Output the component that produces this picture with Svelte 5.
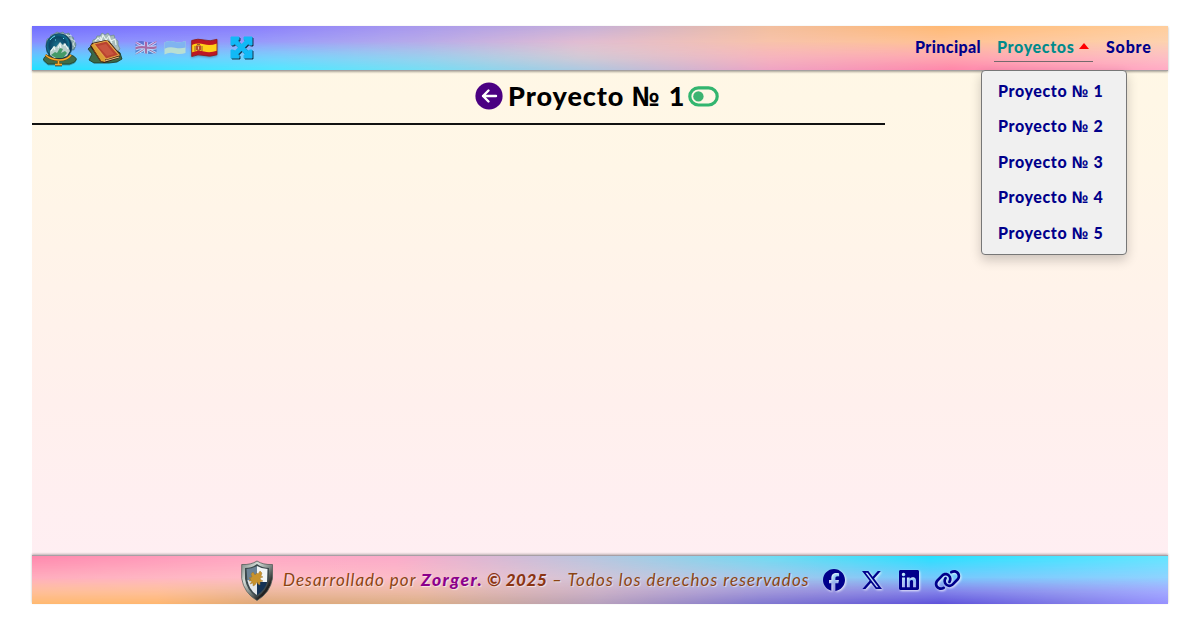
<script>
  const projects = [1, 2, 3, 4, 5];
</script>

<div class="page">
  <header class="bar top">
    <div class="tools">
      <svg class="globe" viewBox="0 0 36 36" width="36" height="36">
        <defs>
          <radialGradient id="sky" cx="45%" cy="45%">
            <stop offset="0" stop-color="#1c7490" /><stop offset=".65" stop-color="#0c4766" /><stop offset=".88" stop-color="#12708f" /><stop offset="1" stop-color="#0a3050" />
          </radialGradient>
        </defs>
        <path d="M4 14l1-6 3-1 1-3 3-1 3-2 3 1 3-1 2 2 4-1 1 4 3 0 1 4 2 3-2 5-26 2z" fill="#8eaaae" stroke="#5b8285" stroke-width=".6" />
        <path d="M24 3l2 2 3-1 0 4 4 2-2 3 2 3" fill="none" stroke="#d4e5e4" stroke-width=".9" />
        <path d="M1.500 29q0-4 6-5l5 2 11-1q7-3 11 3l-2 3-5 2H6z" fill="#3f6c48" stroke="#1f4029" stroke-width=".8" />
        <circle cx="17" cy="15.500" r="12.800" fill="url(#sky)" stroke="#0c3f5e" stroke-width=".8" />
        <path d="M8 24l0-4 4-5 2 1 4-5 3 3 1-2 3 4 1-1 2 5-3 5-6 2h-7z" fill="#b7cecb" />
        <path d="M9 24l4-3 2 1 3-5 3 1-2 4 4-2 2 2-4 5h-7z" fill="#459a68" />
        <path d="M9 20l3-4 1 3m3-2l2-4 1 4m3-2l1-2 3 5" fill="none" stroke="#edf8f6" stroke-width="1.100" />
        <path d="M8 9q2-3 5-4M21 7l1 1m-9 1l1 0" fill="none" stroke="#6de0ec" />
        <path d="M3.500 24q5 4.500 13 5t12.500-5M16.500 30v3m-3.500.5h7" fill="none" stroke="#6b420c" stroke-width="2.400" />
        <path d="M3.500 24q5 4.500 13 5t12.500-5M16.500 30v3m-3.500.5h7" fill="none" stroke="#f5ac2f" stroke-width="1.500" />
      </svg>
      <svg class="book" viewBox="0 0 36 34" width="36" height="34">
        <path d="M5 14l1-5 3-1 1-3 3 0 2-3 3 2 3-2 2 3 4-1 1 4 3 2v4l2 4-6 5-16-4z" fill="#a9bdba" stroke="#6f8c87" stroke-width=".7" />
        <path d="M8 10l3-3 3 3 2-6 3 5 3-4 2 5 4-2 1 6M13 6l2 4m7-3l3 5" fill="none" stroke="#eaf5f1" stroke-width="1.100" />
        <path d="M1 18q4-5 8-1l3 6q9-2 14 0l4-3q4 1 4 5l1 3-5 3-8 1H7l-5-3 3-6z" fill="#3d6845" stroke="#1b3523" stroke-width=".8" />
        <path d="M3 15l2-3 14-3 3 1 11 13-1 4-15 5-4-2z" fill="#3b1710" />
        <path d="M4 14l10 16 4 1 0-4L8 12z" fill="#d99f33" />
        <path d="M6.500 19l8 12" stroke="#774014" />
        <path d="M7 13l13-3 12 14-13 4z" fill="#b9432f" stroke="#e2a447" stroke-width="1.200" />
        <path d="M11 15l8-2 8 10-7 2z" fill="#c9553f" />
        <path d="M18 30l14-4" stroke="#e4c27f" stroke-width="1.100" />
      </svg>
      <svg class="uk faded" viewBox="0 0 22 16" width="22" height="16">
        <defs><clipPath id="flag"><path d="M.5 2.500Q5 .2 10.500 1.700T21.500 1v12q-5 2-10.500.4T.5 14.500z" /></clipPath></defs>
        <g clip-path="url(#flag)">
          <path d="M0 0h22v16H0z" fill="#23459b" />
          <path d="M0 2l22 12M22 1L0 15" stroke="#fff" stroke-width="2.800" />
          <path d="M0 2l22 12M22 1L0 15" stroke="#d51d3a" />
          <path d="M11 0v16M0 8.500q5-2 11-1T22 7" fill="none" stroke="#fff" stroke-width="4.200" />
          <path d="M11 0v16M0 8.500q5-2 11-1T22 7" fill="none" stroke="#d51d3a" stroke-width="2.200" />
        </g>
      </svg>
      <svg class="ua" viewBox="0 0 22 16" width="22" height="16">
        <path d="M.5 2.500Q5 .2 10.500 1.700T21.500 1v12q-5 2-10.500.4T.5 14.500z" fill="#b9dfd3" />
        <path d="M.5 2.500Q5 .2 10.500 1.700T21.500 1v6.500q-5 1.500-10.500.2T.5 8.700z" fill="#80b4f0" />
      </svg>
      <svg class="es" viewBox="0 0 27 20" width="27" height="20">
        <path d="M.7 2.500Q7 .2 13 2t13-.7v15.500q-7 2.400-13 .7T.7 18.500z" fill="#bd1723" />
        <path d="M.7 7Q7 4.500 13 6.300T26 5.500v7.300q-7 2.400-13 .7T.7 14.500z" fill="#ffd019" />
        <path d="M.7 2.500Q7 .2 13 2t13-.7v15.500q-7 2.400-13 .7T.7 18.500z" fill="none" stroke="#8a1a16" stroke-width=".8" />
        <path d="M5 7.500h5v4q-2.500 3-5 0z" fill="#b84b2f" /><path d="M4 8v5m7-5v5M6 6.500h3" stroke="#985f32" /><path d="M7.500 8.500v3" stroke="#e8b99c" />
      </svg>
      <svg class="expand" viewBox="0 0 24 24" width="24" height="24">
        <path d="M4 4l15 15M19 4L4 19" stroke="#12b9f6" stroke-width="4.800" />
        <path d="M1 1h8v2.500L3.500 9H1zM22 1h-8v2.500L19.500 9H22zM1 22h8v-2.500L3.500 14H1zM22 22h-8v-2.500l5.500-5.500H22z" fill="#12b9f6" stroke="#12b9f6" stroke-width="1" stroke-linejoin="round" />
      </svg>
    </div>
    <nav>
      <a class="home" href="#home">Principal</a>
      <a class="active" href="#projects">Proyectos<i></i></a>
      <a class="about" href="#about">Sobre</a>
    </nav>
    <div class="menu">
      {#each projects as n}<a href="#p{n}">Proyecto <span class="no">№</span> {n}</a>{/each}
    </div>
  </header>

  <main>
    <div class="heading">
      <svg viewBox="0 0 28 28" width="28" height="28"><circle cx="14" cy="14" r="13.600" fill="#4b0082" /><path d="M21 14H8m5.500-5.500L8 14l5.500 5.500" fill="none" stroke="#fff" stroke-width="2.400" stroke-linecap="round" stroke-linejoin="round" /></svg>
      <h1>Proyecto <span class="no">№</span> 1</h1>
      <svg class="toggle" viewBox="0 0 31 21" width="31" height="21"><rect x="1.800" y="1.800" width="27.400" height="17.200" rx="8.600" fill="none" stroke="#32b56f" stroke-width="3.200" /><circle cx="10.400" cy="10.400" r="5.200" fill="#3cb371" /></svg>
    </div>
  </main>

  <footer class="bar bottom">
    <svg class="shield" viewBox="0 0 32 42" width="32" height="42">
      <defs><linearGradient id="metal" x2="1" y2="1"><stop stop-color="#788380" /><stop offset=".3" stop-color="#d5dcd7" /><stop offset=".55" stop-color="#77827f" /><stop offset=".75" stop-color="#222" /><stop offset="1" stop-color="#111" /></linearGradient></defs>
      <path d="M.7 4.500Q10 5 16 1q6 4 15.500 3.500v14Q29 33 16 40.500 3 33 .7 18.500z" fill="url(#metal)" stroke="#56605c" stroke-width=".8" />
      <path d="M4 8q7 0 12-4 5 4 12 4v11Q26 31 16 37 6 31 4 19z" fill="#3c494d" />
      <path d="M5.500 9q6 0 10.500-3v16H6.500z" fill="#6b8295" /><path d="M16 6q5 3 10.500 3l-.5 13H16z" fill="#f1f5f6" /><path d="M6.500 20l9.500 2v13Q8 30 6.500 20z" fill="#e4e8ea" /><path d="M16 22h10q-2 8-10 13z" fill="#143254" />
      <path d="M10 14l2-2 2 3 2-2 1 1 2-3 2 2-1 3 2 1-3 1 1 2 2 1-3 1 0 3-2-1-1-2-2 3-2 1 0-3-3 1 2-3-3 0 2-2-2-1 3-1z" fill="#c8932d" stroke="#97702a" stroke-width=".4" />
    </svg>
    <p><span class="dev">Desarrollado por</span><b class="name">Zorger.</b><b class="year">© 2025</b><span class="rights">– Todos los derechos reservados</span></p>
    <div class="social">
      <svg class="fb" viewBox="0 0 512 512" width="22" height="22"><path d="M512 256C512 114.600 397.400 0 256 0S0 114.600 0 256C0 376 82.700 476.800 194.200 504.500V334.200H141.400V256h52.800V222.300c0-87.100 39.400-127.500 125-127.500c16.200 0 44.200 3.200 55.700 6.400V172c-6-.6-16.500-1-29.600-1c-42 0-58.200 15.900-58.200 57.200V256h83.600l-14.400 78.200H287V510.100C413.800 494.800 512 386.900 512 256z" /></svg>
      <svg class="x" viewBox="0 0 16 16" width="20" height="22"><path d="M12.600.75h2.454l-5.360 6.142L16 15.250h-4.937l-3.867-5.070-4.425 5.070H.316l5.733-6.570L0 .75h5.063l3.495 4.633L12.601.75Zm-.86 13.028h1.360L4.323 2.145H2.865z" /></svg>
      <svg class="li" viewBox="0 32 448 448" width="20" height="20"><path d="M416 32H31.900C14.300 32 0 46.500 0 64.300v383.400C0 465.500 14.300 480 31.900 480H416c17.600 0 32-14.500 32-32.300V64.300c0-17.800-14.400-32.300-32-32.300zM135.400 416H69V202.200h66.500V416zm-33.200-243c-21.300 0-38.500-17.300-38.500-38.500S80.900 96 102.200 96c21.200 0 38.500 17.300 38.500 38.500 0 21.300-17.200 38.500-38.500 38.500zm282.100 243h-66.400V312c0-24.800-.5-56.700-34.500-56.700-34.600 0-39.900 27-39.900 54.900V416h-66.400V202.200h63.700v29.200h.9c8.900-16.800 30.600-34.500 62.200-34.500 66.500 0 78.900 43.800 78.900 100.900V416z" /></svg>
      <svg class="link" viewBox="0 0 640 512" width="27" height="22" preserveAspectRatio="none"><path d="M579.800 267.700c56.500-56.500 56.500-148 0-204.500c-50-50-128.800-56.500-186.300-15.400l-1.600 1.100c-14.400 10.300-17.700 30.300-7.400 44.600s30.300 17.700 44.600 7.400l1.600-1.100c32.100-22.900 76-19.300 103.800 8.600c31.500 31.500 31.500 82.500 0 114L422.300 334.800c-31.500 31.500-82.500 31.500-114 0c-27.900-27.900-31.500-71.800-8.600-103.800l1.100-1.600c10.300-14.400 6.900-34.400-7.400-44.600s-34.400-6.900-44.600 7.400l-1.100 1.600C206.500 251.200 213 330 263 380c56.500 56.500 148 56.500 204.500 0L579.800 267.700zM60.200 244.300c-56.500 56.500-56.500 148 0 204.500c50 50 128.800 56.500 186.300 15.400l1.600-1.100c14.400-10.300 17.700-30.300 7.400-44.600s-30.300-17.700-44.600-7.400l-1.600 1.100c-32.100 22.900-76 19.300-103.800-8.600C74 372 74 321 105.500 289.500L217.700 177.200c31.500-31.500 82.500-31.500 114 0c27.900 27.900 31.500 71.800 8.600 103.900l-1.100 1.600c-10.300 14.400-6.900 34.400 7.400 44.600s34.400 6.900 44.600-7.400l1.100-1.600C433.500 260.800 427 182 377 132c-56.500-56.500-148-56.500-204.500 0L60.200 244.300z" /></svg>
    </div>
  </footer>
</div>

<style>
  :global(body) { background: #fff; }
  .page { box-sizing: border-box; width: 1136px; height: 578px; margin: 26px 32px; display: flex; flex-direction: column; font-family: Lato, sans-serif; background: linear-gradient(#fff8e5, #fff6e7 25%, #fff0ed 65%, #ffeef4); }
  svg { display: block; flex: none; }
  .bar { position: relative; z-index: 1; display: flex; flex: none; isolation: isolate; }
  .bar::before, .bar::after { content: ""; position: absolute; inset: 0; z-index: -1; }
  .top { height: 44px; border-bottom: 1px solid #a5a0a0; box-shadow: 0 1px 2px #0005; justify-content: space-between; background: linear-gradient(90deg, #a2b2ff, #a8b8fb 20%, #c7bee7 34%, #ffcccb 48%, #ffc8b8 64%, #ffccb6 80%, #fad8c5); }
  .top::before { background: linear-gradient(90deg, #716cff, #8a7ffb 20%, #a596ef 32%, #c6b0d8 49%, #f2be9e 65%, #ffb974 80%, #ffcd9b); mask-image: linear-gradient(#000, transparent 75%); }
  .top::after { background: linear-gradient(90deg, #20e1ff, #52e7ff 22%, #78ddf3 35%, #b0c7df 49%, #efa4c3 65%, #ff86aa 81%, #ffabc5); mask-image: linear-gradient(transparent 35%, #000); }
  .tools { display: flex; align-items: flex-start; padding-left: 10px; }
  .globe { margin-top: 5px; filter: drop-shadow(0 1px 0 #205c5588); }
  .book { margin: 5px 0 0 9px; }
  .uk { margin: 14px 0 0 12px; }
  .ua { margin: 14px 0 0 7px; }
  .faded { opacity: .45; }
  .es { margin: 12px 0 0 5px; filter: drop-shadow(0 1px 1px #0004); }
  .expand { margin: 10px 0 0 12px; filter: drop-shadow(1px 1px .5px #012c); }
  a { color: #00008b; text-decoration: none; font-weight: 900; }
  nav { display: flex; padding: 11px 0 0; font-size: 16px; line-height: 20px; letter-spacing: .4px; }
  .home { width: 79px; }
  .active { box-sizing: border-box; width: 99px; height: 25px; padding-left: 3px; letter-spacing: .65px; color: #008b8b; border-bottom: 1px solid #75696d; margin-right: 13px; display: flex; }
  .active i { margin: 6px 0 0 5px; width: 0; height: 0; border: 5.500px solid transparent; border-top: 0; border-bottom: 6px solid red; }
  .about { width: 62px; letter-spacing: .8px; }
  .menu { position: absolute; left: 949px; top: 44px; box-sizing: border-box; width: 146px; height: 185px; padding: 2px 0 0 16px; border: 1px solid #777; border-radius: 4px; background: #f0f0f0; box-shadow: 0 5px 12px #0003; font-size: 16px; letter-spacing: .6px; }
  .menu a { display: block; height: 35.400px; line-height: 35px; white-space: nowrap; }
  .no { font-family: "Noto Sans", sans-serif; font-weight: 700; line-height: 1; margin-right: .03em; }
  main { flex: 1; }
  .heading { display: flex; align-items: center; box-sizing: border-box; width: 853px; height: 54px; padding: 0 0 2px 443px; border-bottom: 2px solid #111; }
  h1 { width: 180px; margin: -1px 0 0 5px; box-sizing: border-box; font-size: 27px; line-height: 36px; font-weight: 900; letter-spacing: .95px; white-space: nowrap; }
  .toggle { margin-top: 1px; }
  .bottom { height: 48px; border-top: 1px solid #a79fa5; box-shadow: 0 -1px 2px #0004; background: linear-gradient(90deg, #ffc6ca, #ffcccb 20%, #ffc8c8 32%, #e4c5d3 49%, #c5bce9 66%, #aab8fb 80%, #aec6ff); }
  .bottom::before { background: linear-gradient(90deg, #ff88ad, #ffa7c3 20%, #fbaac9 32%, #b8c5df 49%, #6edbf2 65%, #25e1ff 79%, #62e6ff); mask-image: linear-gradient(#000, transparent 75%); }
  .bottom::after { background: linear-gradient(90deg, #ffb970, #ffb770 11%, #dea879 20%, #dcae87 34%, #b6a0bd 50%, #8178cf 64%, #5e52da 80%, #7f79e6 91%, #9791ff); mask-image: linear-gradient(transparent 45%, #000); }
  .shield { margin: 4px 0 0 209px; }
  p { display: flex; margin: 13px 0 0 10px; color: #8b4513; font-size: 17px; line-height: 22px; font-style: italic; white-space: nowrap; text-shadow: 1px 1px 1px #fff9; }
  .dev { width: 138px; letter-spacing: 1px; }
  .name { width: 66px; color: #8b008b; font-size: 17.500px; letter-spacing: 1.450px; font-weight: 900; }
  .year { width: 65px; color: #8b3513; letter-spacing: .55px; font-weight: 900; }
  .rights { width: 271px; letter-spacing: 1.080px; }
  .social { display: flex; align-items: center; height: 48px; fill: #00008b; filter: drop-shadow(1px 1px 1px #fffc); }
  .x { margin-left: 17px; }
  .li { margin-left: 17px; }
  .link { margin-left: 15px; }
</style>
